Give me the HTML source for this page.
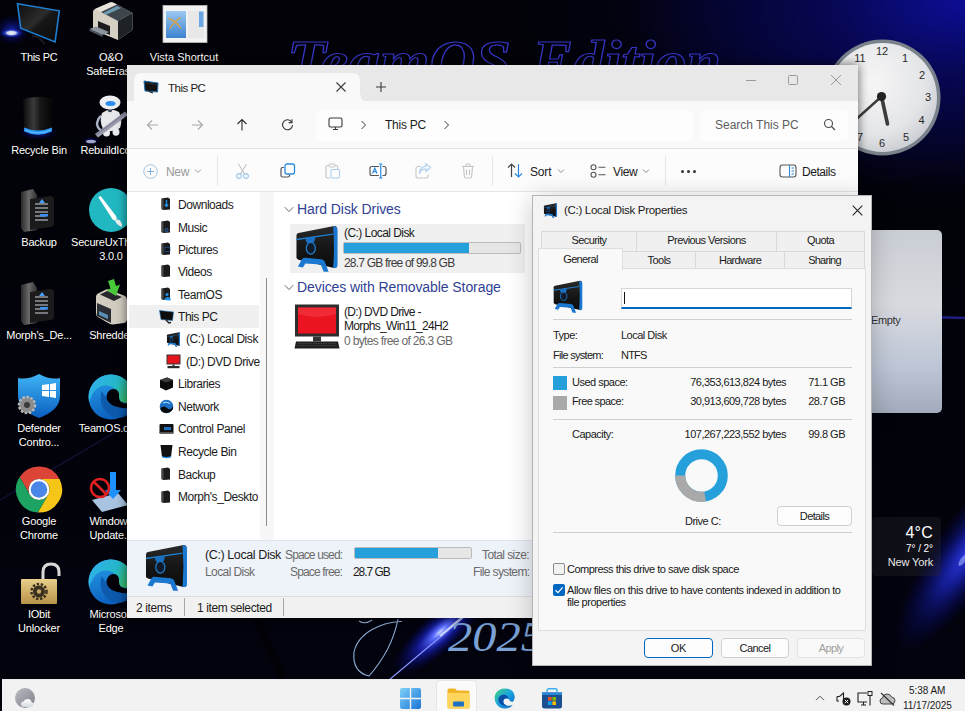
<!DOCTYPE html>
<html><head><meta charset="utf-8">
<style>
*{box-sizing:border-box;margin:0;padding:0}
html,body{width:965px;height:711px;overflow:hidden}
body{position:relative;font-family:"Liberation Sans",sans-serif;font-size:12px;color:#1a1a1a;background:#02030a}
.a{position:absolute}
.t{position:absolute;white-space:nowrap;line-height:14px}
svg{position:absolute;overflow:visible}
#bg{left:0;top:0;width:965px;height:679px;background:
 radial-gradient(ellipse 340px 190px at 965px 0px, rgba(14,14,156,0.95) 0%, rgba(8,8,100,0.75) 40%, rgba(3,3,40,0) 100%),
 radial-gradient(ellipse 460px 210px at 965px 0px, rgba(6,6,70,0.5) 0%, rgba(3,3,30,0) 100%),
 linear-gradient(180deg,#020208 0%,#02020a 60%,#03030e 100%)}
.dl{position:absolute;color:#fff;font-size:11px;text-align:center;line-height:14px;text-shadow:0 0 2px #000,0 1px 1px #000;width:80px;letter-spacing:-0.2px}
/* explorer */
#ex{left:127px;top:65px;width:731px;height:553px;background:#e8e8e8;box-shadow:0 0 10px rgba(0,0,0,.6)}
.nv{position:absolute;left:178px;font-size:12px;letter-spacing:-0.45px;line-height:14px;color:#1b1b1b;white-space:nowrap}
.ni{position:absolute;left:160px;width:11px;height:13px}
/* props */
#pr{left:532px;top:195px;width:340px;height:471px;background:#f3f3f3;border:1px solid #b5b5b5;box-shadow:0 4px 24px rgba(0,0,0,.22)}
.pt{position:absolute;font-size:11px;letter-spacing:-0.5px;line-height:13px;color:#1a1a1a;white-space:nowrap}
.tab{position:absolute;background:#f0f0f0;border:1px solid #d9d9d9;border-bottom:none;font-size:11px;letter-spacing:-0.35px;text-align:center;line-height:17px;color:#1a1a1a}
.btn{position:absolute;background:#fdfdfd;border:1px solid #d0d0d0;border-radius:4px;font-size:11px;letter-spacing:-0.3px;text-align:center;line-height:18px;color:#1a1a1a}
#tb{left:0;top:679px;width:965px;height:32px;background:#eeeeee;border-top:1px solid #dcdcdc}
</style></head><body>
<svg width="0" height="0" style="position:absolute"><defs>
<linearGradient id="drvb" x1="0" y1="0" x2="0" y2="1"><stop offset="0" stop-color="#2a2a2a"/><stop offset="0.5" stop-color="#161616"/><stop offset="1" stop-color="#0c0c0c"/></linearGradient>
<g id="drv">
<path d="M6 14 Q6 12 8 11.5 L44 4.5 Q47 4 47 7 V44 Q47 47.5 44 47 L8 38.5 Q6 38 6 36 Z" fill="url(#drvb)"/>
<path d="M43 4.8 Q47 4 47.5 8 V44 Q47.5 47.5 44 47 L43 46.8 Q44.8 26 43 4.8 Z" fill="#1b78d0"/>
<path d="M6 17.5 L43 12 V13.3 L6 18.8 Z" fill="#1e7fd0"/>
<path d="M15 17 L25 15.5 Q25 21 22 22 L18 22.5 Q15 21 15 17 Z" fill="#1b6fc0"/>
<ellipse cx="20.5" cy="27" rx="4.6" ry="6" fill="#101c2a" stroke="#1e78c8" stroke-width="1.3"/>
<path d="M7.5 45.5 L11.5 38 Q12.5 36.5 15 36.5 L31 38 Q33.5 38.3 34.5 40.5 L38.5 50.8 L33.5 50.8 L30.5 43.5 L15 42.5 L12.5 46.5 Z" fill="#1b78d0"/>
</g></defs></svg>
<div id="bg" class="a"></div>
<svg style="left:0;top:0" width="965" height="679" viewBox="0 0 965 679">
<defs>
 <radialGradient id="halo" cx="0.5" cy="0.5" r="0.5"><stop offset="0" stop-color="#c8d8ff"/><stop offset="0.15" stop-color="#5a6cff"/><stop offset="0.45" stop-color="#1a24c8" stop-opacity="0.7"/><stop offset="1" stop-color="#000060" stop-opacity="0"/></radialGradient>
 <radialGradient id="halo2" cx="0.5" cy="0.5" r="0.5"><stop offset="0" stop-color="#3040ff"/><stop offset="0.35" stop-color="#1a24c0" stop-opacity="0.8"/><stop offset="0.7" stop-color="#0a1080" stop-opacity="0.4"/><stop offset="1" stop-color="#000060" stop-opacity="0"/></radialGradient>
</defs>
<path d="M0 500 L560 170" stroke="#1a1a4a" stroke-width="1.5" opacity="0.6"/>
<path d="M900 316 L965 318" stroke="#2424a0" stroke-width="2.5" opacity="0.8"/>
<path d="M256 618 L283 679" stroke="#000" stroke-width="7" opacity="0.5"/>
<text x="287" y="80" font-family="Liberation Serif" font-weight="bold" font-style="italic" font-size="56" textLength="224" lengthAdjust="spacingAndGlyphs" fill="none" stroke="#3636c4" stroke-width="1.2">TeamOS</text>
<text x="532" y="80" font-family="Liberation Serif" font-weight="bold" font-style="italic" font-size="56" textLength="189" lengthAdjust="spacingAndGlyphs" fill="none" stroke="#3636c4" stroke-width="1.2">Edition</text>
<ellipse cx="440" cy="632" rx="62" ry="20" fill="url(#halo)" transform="rotate(-42 440 632)"/>
<path d="M389 680 L470 612" stroke="#8a98ff" stroke-width="1.1"/>
<path d="M440 636 L466 614" stroke="#e8f0ff" stroke-width="2.2" opacity="0.75"/>
<path d="M359 621 Q365 625 372 620 M398 619 Q392 650 369 676 Q352 672 354 652 Q358 633 385 624 Q395 621 402 621.5" fill="none" stroke="#8fb0dc" stroke-width="1.1"/>
<text x="448" y="651" font-family="Liberation Serif" font-style="italic" font-size="42" fill="#7aa2d6" textLength="97" lengthAdjust="spacingAndGlyphs">2025</text>
<ellipse cx="968" cy="552" rx="120" ry="34" fill="url(#halo2)" opacity="0.9" transform="rotate(-55 968 552)"/>
<ellipse cx="963" cy="560" rx="7" ry="2.5" fill="#b8c8ff" opacity="0.5" transform="rotate(-55 963 560)"/>
</svg>
<!-- clock gadget -->
<svg style="left:820px;top:35px" width="130" height="125" viewBox="820 35 130 125">
 <defs><radialGradient id="face" cx="0.4" cy="0.35" r="0.7"><stop offset="0" stop-color="#f6f6f6"/><stop offset="0.7" stop-color="#e4e5e8"/><stop offset="1" stop-color="#c8cbd0"/></radialGradient></defs>
 <circle cx="882.5" cy="97.5" r="58" fill="#7a828c"/>
 <circle cx="882.5" cy="97.5" r="54.5" fill="url(#face)"/>
 <g font-family="Liberation Sans" font-size="11" fill="#2a2a2a" text-anchor="middle">
  <text x="882" y="55">12</text><text x="905" y="62">1</text><text x="922" y="78.5">2</text><text x="928" y="101">3</text><text x="921.5" y="124">4</text><text x="906" y="141">5</text><text x="882" y="147">6</text><text x="860" y="141">7</text><text x="860" y="62">11</text>
 </g>
 <path d="M881.5 96.5 L887.5 124" stroke="#3c3c3c" stroke-width="3.6" stroke-linecap="round"/>
 <path d="M881.5 96.5 L852 123" stroke="#3c3c3c" stroke-width="2.4" stroke-linecap="round"/>
 <circle cx="881.5" cy="96.5" r="4.6" fill="#222"/>
</svg>
<!-- gadget panel -->
<div class="a" style="left:840px;top:230px;width:102px;height:183px;border-radius:5px;background:linear-gradient(180deg,#c9cdd4 0%,#d9dadf 40%,#bcc6d6 75%,#a2abbb 100%)"></div>
<div class="t" style="left:871px;top:313px;font-size:11px;color:#333;letter-spacing:-0.34px">Empty</div>
<!-- weather -->
<div class="a" style="left:872px;top:517px;width:69px;height:59px;border-radius:4px;background:rgba(40,40,50,0.35)"></div>
<div class="t" style="letter-spacing:0.21px;right:32px;top:524px;font-size:16px;line-height:18px;color:#fff">4°C</div>
<div class="t" style="letter-spacing:-0.07px;right:32px;top:543px;font-size:10px;line-height:12px;color:#fff">7° / 2°</div>
<div class="t" style="right:32px;top:556px;font-size:11px;line-height:13px;color:#e8e8e8;letter-spacing:-0.15px">New York</div>

<!-- ============ DESKTOP ICONS ============ -->
<svg style="left:0;top:0" width="220" height="679" viewBox="0 0 220 679">
<defs>
 <radialGradient id="glow1"><stop offset="0" stop-color="#f4f4e8"/><stop offset="0.35" stop-color="#c8d4f0"/><stop offset="0.6" stop-color="#2a3fd0" stop-opacity="0.7"/><stop offset="1" stop-color="#0010a0" stop-opacity="0"/></radialGradient>
 <radialGradient id="halo3"><stop offset="0" stop-color="#1a30e0" stop-opacity="0.7"/><stop offset="1" stop-color="#000080" stop-opacity="0"/></radialGradient>
 <linearGradient id="vst" x1="0" y1="0" x2="0" y2="1"><stop offset="0" stop-color="#9cc8f0"/><stop offset="1" stop-color="#3c82d0"/></linearGradient>
 <linearGradient id="scr" x1="0" y1="0" x2="1" y2="1"><stop offset="0" stop-color="#0c0c0c"/><stop offset="0.45" stop-color="#2c2c2c"/><stop offset="0.55" stop-color="#161616"/><stop offset="1" stop-color="#0a0a0a"/></linearGradient>
 <linearGradient id="bin" x1="0" y1="0" x2="1" y2="0"><stop offset="0" stop-color="#0a0a0a"/><stop offset="0.35" stop-color="#3a3a3a"/><stop offset="0.6" stop-color="#151515"/><stop offset="1" stop-color="#050505"/></linearGradient>
 <linearGradient id="fold" x1="0" y1="0" x2="1" y2="0"><stop offset="0" stop-color="#2a2a2a"/><stop offset="0.5" stop-color="#6a6a6a"/><stop offset="1" stop-color="#303030"/></linearGradient>
 <linearGradient id="shield" x1="0" y1="0" x2="0" y2="1"><stop offset="0" stop-color="#3fb3f5"/><stop offset="1" stop-color="#0a5fc0"/></linearGradient>
 <linearGradient id="gold" x1="0" y1="0" x2="0" y2="1"><stop offset="0" stop-color="#e8cf8a"/><stop offset="1" stop-color="#b8934a"/></linearGradient>
 <linearGradient id="edgB" x1="0" y1="0" x2="0.3" y2="1"><stop offset="0" stop-color="#2aa0ea"/><stop offset="1" stop-color="#0c62c0"/></linearGradient><linearGradient id="edgT" x1="0" y1="0.3" x2="1" y2="0.7"><stop offset="0" stop-color="#30b0ec"/><stop offset="0.55" stop-color="#25b8c8"/><stop offset="1" stop-color="#3cbf5a"/></linearGradient>
</defs>
<!-- This PC -->
<ellipse cx="12" cy="30" rx="18" ry="15" fill="url(#halo3)"/><ellipse cx="11.5" cy="33" rx="12" ry="5" fill="url(#glow1)"/>
<path d="M17.5 3.7 L59.3 10.8 L55.1 41.9 L20.7 28.2 Z" fill="url(#scr)" stroke="#1e7fd0" stroke-width="1.6"/>
<path d="M32 36 L38 37 L45 44" stroke="#1a1a1a" stroke-width="2" fill="none"/>
<!-- O&O -->
<path d="M93 12 Q93 10 95 9 L110 2.5 Q112 2 114 3 L132.5 13 V30 L118 40 L96 31 Q93 30 93 28 Z" fill="#d6d0c4"/>
<path d="M95 9 L110 2.5 Q112 2 114 3 L117 4.6 L101 12 Z" fill="#e8e4dc"/>
<path d="M101 12 L117 4.6 L132.5 13 L118 21 Z" fill="#3c464c"/>
<path d="M103 13 L117 6 L121 8 L106 15 Z" fill="#7ab0c8" opacity="0.8"/>
<path d="M118 21 L132.5 13 V30 L118 40 Z" fill="#1e2226"/>
<path d="M98 21 L110 26 V35 L98 30 Z" fill="#1c1c1c"/>
<path d="M89.5 29 L96 26.5 L109 32 L102.5 35 Z" fill="#8c949e"/>
<path d="M89.5 29 V31 L102.5 37 V35 Z" fill="#4c545c"/>
<!-- Vista shortcut -->
<rect x="163" y="5.5" width="44" height="37" fill="#f2f2f2" stroke="#bdbdbd" stroke-width="0.8"/>
<rect x="166" y="11" width="20" height="27" fill="url(#vst)"/>
<path d="M168.5 18.5 Q175 20 181 28.5 M180.5 17.5 Q175 21 169.5 29" stroke="#dca040" stroke-width="1.3" fill="none"/>
<rect x="188" y="11" width="16" height="27" fill="#e8e8e8"/>
<rect x="199" y="11.5" width="4.5" height="15.5" fill="#6aa6e4"/>
<!-- Recycle bin -->
<ellipse cx="38" cy="132" rx="20" ry="8" fill="url(#halo3)"/>
<path d="M23 99 Q38 95 53 99 L52 130 Q38 137 24 130 Z" fill="url(#bin)"/>
<path d="M24 127.5 Q38 133.5 52 127.5 L51.8 131.5 Q38 138 24.2 131.5 Z" fill="#2a9af8"/>
<path d="M25 130 Q38 136 51 130" stroke="#8fd0ff" stroke-width="0.8" fill="none" opacity="0.8"/>
<!-- robot -->
<ellipse cx="91" cy="141" rx="9" ry="4" fill="url(#halo3)"/>
<ellipse cx="91" cy="141.5" rx="5" ry="1.8" fill="#dfe8f0" opacity="0.7"/>
<path d="M101 116 Q98 118 97 124 Q98 129 101 130" stroke="#aab4c4" stroke-width="2.4" fill="none"/>
<path d="M102 113 Q110 107 119 112 Q123 120 120 128 Q111 134 103 129 Q99 121 102 113 Z" fill="#e6e8ec"/>
<ellipse cx="106.5" cy="133" rx="3.5" ry="3.5" fill="#e8eaee"/>
<ellipse cx="116" cy="132" rx="3.5" ry="3.8" fill="#e8eaee"/>
<circle cx="110" cy="110" r="2.2" fill="#3a4250"/>
<ellipse cx="110" cy="102.5" rx="10.5" ry="7" fill="#eceef1"/>
<ellipse cx="110.5" cy="103.5" rx="5" ry="2.5" fill="#2a8cf0"/>
<path d="M95 134 L125 111.5 L128 115 L98 137.5 Z" fill="#9a9cb0"/>
<path d="M96 135 L126 112.5" stroke="#6a6c80" stroke-width="0.8"/>
<!-- Backup / Morph -->
<g id="bk">
<path d="M21 192 L33 189 L37 195 V230 L24 232 L21 228 Z" fill="url(#fold)"/>
<path d="M30 199 L50 196 Q54 196 54 200 V224 Q54 227 50 227 L30 230 Z" fill="#1b1b1b"/>
<path d="M35 204 H48 M35 208 H48 M35 212 H48 M35 216 H46 M35 220 H48" stroke="#cfd6de" stroke-width="1.2"/>
<path d="M39 203 L42 199 L45 203 Z" fill="#4aa0ff"/>
<rect x="40" y="214" width="8" height="2.5" fill="#3a8ff0"/>
</g>
<use href="#bk" y="93"/>
<!-- SecureUx -->
<circle cx="111" cy="210" r="22" fill="#21b8c2"/>
<path d="M98.5 197.5 Q99.5 195.5 101 196.5 L116 216 Q117.5 219 115.5 220.5 Q113 221 112 218.5 Z" fill="#fff"/>
<path d="M115.5 220 Q119 218.5 121 222 Q123 226 121.5 227 Q118 226 115.5 222 Z" fill="#f2f2f2"/>
<!-- Shredder -->
<path d="M96 297 Q96 294 99 293 L106 289.5 Q108 289 110 290 L125 296 Q127 297 127 300 V319 Q127 322 124 323 L113 324.5 Q111 324.5 109 323.5 L98 317 Q96 316 96 313 Z" fill="#d2ccc0"/>
<path d="M100 294.5 L107 291 L122 297 L114 301 Z" fill="#26282c"/>
<path d="M97 303 L111 309 V323 L97 316 Z" fill="#2a2e34"/>
<path d="M99 311 L108 315 V319 L99 315 Z" fill="#5a90b8"/>
<path d="M108 281 L114 279 L116 286 L120 284.5 L116 296 L106.5 290 L110.5 288.5 Z" fill="#48c83a"/>
<!-- Defender -->
<path d="M39 374 Q50 380 60 378 V396 Q60 410 39 418 Q18 410 18 396 V378 Q28 380 39 374 Z" fill="url(#shield)"/>
<path d="M42 385 L49 384 V390 H42 Z M50 384 L56 383 V390 H50 Z M42 391 H49 V397 L42 396 Z M50 391 H56 V398 L50 397 Z" fill="#fff"/>
<circle cx="27" cy="405" r="8" fill="#8a8a8a"/><circle cx="27" cy="405" r="8" fill="none" stroke="#b8b8b8" stroke-width="2.5" stroke-dasharray="2.5 1.6"/><circle cx="27" cy="405" r="3" fill="#3a3a3a"/>
<!-- TeamOS edge -->
<g id="edge1" transform="translate(111 397)">
<circle r="22.5" fill="url(#edgB)"/>
<path d="M-21.8 5.5 A22.5 22.5 0 1 1 22.2 3.6 L22.2 6 Q12 6.5 8 3.5 Q7 -10 -4 -11.5 Q-17 -12 -21.8 5.5 Z" fill="url(#edgT)"/>
<path d="M-9.5 -6 Q-14 12 3 20.5 Q14 23 22.5 13 L22.5 10.5 Q12 11 5 8 Q-4 3 -9.5 -6 Z" fill="#0d57a8" opacity="0.85"/>
<path d="M-4.5 -1 Q-3 -8.5 3.5 -8 Q9 -6.5 8 0.5 Q8.5 5.5 13.5 6.2 L22.5 6.5 L22.5 11.5 Q12 12 4.5 9.5 Q-5 6 -4.5 -1 Z" fill="#020208"/>
</g>
<!-- Chrome -->
<g transform="translate(39 489.5)">
<path d="M-19.34 -12.5 A23 23 0 0 1 20.5 -10.5 L0 -10.5 A10.5 10.5 0 0 0 -9.09 5.25 Z" fill="#db4437"/>
<path d="M20.5 -10.5 A23 23 0 0 1 -1.16 23 L9.09 5.25 A10.5 10.5 0 0 0 0 -10.5 Z" fill="#f5c518"/>
<path d="M-1.16 23 A23 23 0 0 1 -19.34 -12.5 L-9.09 5.25 A10.5 10.5 0 0 0 9.09 5.25 Z" fill="#1da462"/>
<circle r="10.5" fill="#fff"/><circle r="8.3" fill="#4a86e8"/>
</g>
<!-- Windows update -->
<path d="M92 500 L118 493 L128 505 L102 512 Z" fill="#a8c4e0"/>
<path d="M110 472 H116 V490 H121 L113 499 L105 490 H110 Z" fill="#1e90ff"/>
<circle cx="100" cy="488" r="9" fill="none" stroke="#e02020" stroke-width="2.6"/>
<path d="M94 482 L106 494" stroke="#e02020" stroke-width="2.6"/>
<!-- IObit -->
<path d="M43 580 V572 Q43 564 51 564 Q59 564 59 572 V576" fill="none" stroke="#d8d8d8" stroke-width="3"/>
<rect x="21" y="579" width="36" height="25" rx="1" fill="url(#gold)"/>
<circle cx="39" cy="591.5" r="6" fill="#3a3020"/><circle cx="39" cy="591.5" r="7.5" fill="none" stroke="#3a3020" stroke-width="2.5" stroke-dasharray="2.4 1.7"/><circle cx="39" cy="591.5" r="2.2" fill="#c8a868"/>
<use href="#edge1" y="185"/>
</svg>
<div class="dl" style="left:-1px;top:50px;font-size:11px;letter-spacing:-0.3px">This PC</div>
<div class="dl" style="left:71px;top:50px">O&amp;O<br>SafeErase</div>
<div class="dl" style="letter-spacing:0.02px;left:144px;top:50px">Vista Shortcut</div>
<div class="dl" style="letter-spacing:-0.22px;left:-1px;top:143px">Recycle Bin</div>
<div class="dl" style="left:71px;top:143px">RebuildIcons</div>
<div class="dl" style="left:-1px;top:235px">Backup</div>
<div class="dl" style="left:71px;top:235px">SecureUxTheme<br>3.0.0</div>
<div class="dl" style="left:-1px;top:328px">Morph's_De...</div>
<div class="dl" style="left:71px;top:328px">Shredder</div>
<div class="dl" style="left:-1px;top:421px">Defender<br>Contro...</div>
<div class="dl" style="left:71px;top:421px">TeamOS.com</div>
<div class="dl" style="left:-1px;top:514px">Google<br>Chrome</div>
<div class="dl" style="left:71px;top:514px">Windows<br>Update...</div>
<div class="dl" style="left:-1px;top:607px">IObit<br>Unlocker</div>
<div class="dl" style="left:71px;top:607px">Microsoft<br>Edge</div>

<!-- ============ EXPLORER ============ -->
<div id="ex" class="a">
</div>
<!-- tab -->
<div class="a" style="left:134px;top:73px;width:226px;height:30px;background:#f9f9f9;border-radius:7px 7px 0 0"></div>
<div class="a" style="left:360px;top:95px;width:8px;height:6px;background:radial-gradient(circle at 100% 0%, #e8e8e8 7px, #f9f9f9 7.5px)"></div>
<div class="t" style="left:168px;top:81px;font-size:11.5px;letter-spacing:-0.5px;color:#222">This PC</div>
<div class="a" style="left:127px;top:101px;width:731px;height:47px;background:#f9f9f9"></div>
<div class="a" style="left:316px;top:110px;width:377px;height:31px;background:#fdfdfd;border-radius:5px"></div>
<div class="a" style="left:700px;top:110px;width:148px;height:31px;background:#fdfdfd;border-radius:5px"></div>
<div class="t" style="letter-spacing:-0.24px;left:385px;top:118px;font-size:12px;color:#1b1b1b">This PC</div>
<!-- title bar icons -->
<svg style="left:143px;top:80px" width="16" height="14" viewBox="0 0 16 14"><path d="M1 1 L15 3 L14.5 12 L2 11 Z" fill="#141414" stroke="#1c6fb0" stroke-width="1"/><path d="M3 3 L13 4.5" stroke="#2a2a2a" stroke-width="1"/><path d="M6 11.5 L10 13" stroke="#222" stroke-width="1.2"/></svg>
<svg style="left:335px;top:81px" width="12" height="12" viewBox="0 0 12 12"><path d="M1.5 1.5 L10.5 10.5 M10.5 1.5 L1.5 10.5" stroke="#3a3a3a" stroke-width="1.1"/></svg>
<svg style="left:375px;top:81px" width="12" height="12" viewBox="0 0 12 12"><path d="M6 1 V11 M1 6 H11" stroke="#3a3a3a" stroke-width="1.1"/></svg>
<svg style="left:745px;top:74px" width="12" height="12" viewBox="0 0 12 12"><path d="M1 6.5 H11" stroke="#9a9a9a" stroke-width="1"/></svg>
<svg style="left:787px;top:74px" width="12" height="12" viewBox="0 0 12 12"><rect x="1.5" y="1.5" width="9" height="9" rx="1" fill="none" stroke="#9a9a9a" stroke-width="1"/></svg>
<svg style="left:830px;top:74px" width="12" height="12" viewBox="0 0 12 12"><path d="M1 1 L11 11 M11 1 L1 11" stroke="#9a9a9a" stroke-width="1"/></svg>
<!-- nav arrows -->
<svg style="left:146px;top:119px" width="13" height="12" viewBox="0 0 13 12"><path d="M12 6 H1.5 M6 1.5 L1.5 6 L6 10.5" fill="none" stroke="#a9a9a9" stroke-width="1.1"/></svg>
<svg style="left:191px;top:119px" width="13" height="12" viewBox="0 0 13 12"><path d="M1 6 H11.5 M7 1.5 L11.5 6 L7 10.5" fill="none" stroke="#a9a9a9" stroke-width="1.1"/></svg>
<svg style="left:236px;top:118px" width="12" height="13" viewBox="0 0 12 13"><path d="M6 12.5 V1.5 M1.5 6 L6 1.5 L10.5 6" fill="none" stroke="#2b2b2b" stroke-width="1.1"/></svg>
<svg style="left:281px;top:118px" width="13" height="13" viewBox="0 0 13 13"><path d="M10.8 4.2 A5 5 0 1 0 11.5 7" fill="none" stroke="#3a3a3a" stroke-width="1.1"/><path d="M11 1.2 V4.6 H7.6" fill="none" stroke="#3a3a3a" stroke-width="1.1"/></svg>
<!-- address contents -->
<svg style="left:328px;top:117px" width="15" height="14" viewBox="0 0 15 14"><rect x="1" y="1" width="13" height="9" rx="1.5" fill="none" stroke="#3a3a3a" stroke-width="1.1"/><path d="M5 12.5 H10 M7.5 10 V12.5" stroke="#3a3a3a" stroke-width="1.1"/></svg>
<svg style="left:360px;top:120px" width="7" height="10" viewBox="0 0 7 10"><path d="M1.5 1 L5.5 5 L1.5 9" fill="none" stroke="#3a3a3a" stroke-width="1"/></svg>
<svg style="left:443px;top:120px" width="7" height="10" viewBox="0 0 7 10"><path d="M1.5 1 L5.5 5 L1.5 9" fill="none" stroke="#3a3a3a" stroke-width="1"/></svg>
<svg style="left:823px;top:118px" width="13" height="13" viewBox="0 0 13 13"><circle cx="5.5" cy="5.5" r="4" fill="none" stroke="#4a4a4a" stroke-width="1.1"/><path d="M8.5 8.5 L12 12" stroke="#4a4a4a" stroke-width="1.2"/></svg>
<div class="t" style="letter-spacing:-0.01px;left:715px;top:118px;font-size:12px;color:#5e5e5e">Search This PC</div>
<div class="a" style="left:127px;top:148px;width:731px;height:1px;background:#e3e3e3"></div>
<div class="a" style="left:127px;top:149px;width:731px;height:42px;background:#fcfcfc"></div>
<div class="a" style="left:127px;top:191px;width:731px;height:1px;background:#e5e5e5"></div>
<div class="a" style="left:127px;top:192px;width:731px;height:348px;background:#fff"></div>
<div class="a" style="left:260px;top:192px;width:14px;height:348px;background:#f7f7f7"></div>
<div class="a" style="left:266px;top:278px;width:1px;height:248px;background:#8a8a8a"></div>
<!-- command bar -->
<svg style="left:143px;top:164px" width="15" height="15" viewBox="0 0 15 15"><circle cx="7.5" cy="7.5" r="6.8" fill="none" stroke="#a8c4de" stroke-width="1"/><path d="M7.5 4 V11 M4 7.5 H11" stroke="#7fb0dc" stroke-width="1"/></svg>
<div class="t" style="left:166px;top:165px;color:#9a9a9a;letter-spacing:-0.34px">New</div>
<svg style="left:194px;top:168px" width="8" height="6" viewBox="0 0 8 6"><path d="M1 1.5 L4 4.5 L7 1.5" fill="none" stroke="#a0a0a0" stroke-width="1"/></svg>
<div class="a" style="left:217px;top:156px;width:1px;height:30px;background:#e6e6e6"></div>
<svg style="left:235px;top:163px" width="15" height="16" viewBox="0 0 15 16"><path d="M3.5 1 L9.5 11 M11.5 1 L5.5 11" stroke="#b8b8b8" stroke-width="1"/><circle cx="4" cy="13" r="2.4" fill="none" stroke="#9cc6ec" stroke-width="1.1"/><circle cx="11" cy="13" r="2.4" fill="none" stroke="#9cc6ec" stroke-width="1.1"/></svg>
<svg style="left:280px;top:163px" width="16" height="15" viewBox="0 0 16 15"><path d="M4 4.5 H2.5 Q1 4.5 1 6 V12.5 Q1 14 2.5 14 H8 Q9.5 14 9.5 12.5 V11.5" fill="none" stroke="#555" stroke-width="1.2"/><rect x="5" y="1" width="9.5" height="10" rx="2" fill="#fff" stroke="#2b8ae0" stroke-width="1.3"/></svg>
<svg style="left:325px;top:163px" width="16" height="16" viewBox="0 0 16 16"><path d="M4 2.5 H2.5 Q1 2.5 1 4 V13.5 Q1 15 2.5 15 H5" fill="none" stroke="#c4c4c4" stroke-width="1.1"/><rect x="4" y="1" width="6" height="3" rx="1" fill="#fff" stroke="#c4c4c4" stroke-width="1"/><path d="M10 2.5 H11 Q12.5 2.5 12.5 4 V6" fill="none" stroke="#c4c4c4" stroke-width="1.1"/><rect x="6" y="6.5" width="8.5" height="8.5" rx="1.5" fill="#fff" stroke="#a8cdef" stroke-width="1.1"/></svg>
<svg style="left:369px;top:163px" width="18" height="16" viewBox="0 0 18 16"><path d="M10 3.5 H3 Q1 3.5 1 5.5 V10.5 Q1 12.5 3 12.5 H10 M13.5 3.5 H15 Q17 3.5 17 5.5 V10.5 Q17 12.5 15 12.5 H13.5" fill="none" stroke="#555" stroke-width="1.2"/><path d="M3.5 10.5 L5.8 5 L8 10.5 M4.3 8.6 H7.3" fill="none" stroke="#2b8ae0" stroke-width="1.1"/><path d="M10 1 H13.5 M11.75 1 V15 M10 15 H13.5" fill="none" stroke="#2b8ae0" stroke-width="1.2"/></svg>
<svg style="left:415px;top:163px" width="17" height="16" viewBox="0 0 17 16"><path d="M6 3.5 H3 Q1 3.5 1 5.5 V13 Q1 15 3 15 H11 Q13 15 13 13 V11.5" fill="none" stroke="#c8c8c8" stroke-width="1.1"/><path d="M4.5 11 Q5 6 11 6 V8.5 L15.5 4.5 L11 0.8 V3.3 Q4.5 4 4.5 11 Z" fill="none" stroke="#a8cdef" stroke-width="1.1"/></svg>
<svg style="left:461px;top:163px" width="14" height="16" viewBox="0 0 14 16"><path d="M1 3.5 H13 M5 3.5 V2 Q5 1 6 1 H8 Q9 1 9 2 V3.5 M2.5 3.5 L3.3 13.5 Q3.5 15 5 15 H9 Q10.5 15 10.7 13.5 L11.5 3.5 M5.5 6.5 V12 M8.5 6.5 V12" fill="none" stroke="#c4c4c4" stroke-width="1.1"/></svg>
<div class="a" style="left:492px;top:156px;width:1px;height:30px;background:#e6e6e6"></div>
<svg style="left:507px;top:163px" width="16" height="15" viewBox="0 0 16 15"><path d="M4.5 14 V1 M1 4.5 L4.5 1 L8 4.5" fill="none" stroke="#444" stroke-width="1.2"/><path d="M11.5 1 V14 M8 10.5 L11.5 14 L15 10.5" fill="none" stroke="#2b8ae0" stroke-width="1.2"/></svg>
<div class="t" style="left:530px;top:165px;color:#1b1b1b;letter-spacing:-0.18px">Sort</div>
<svg style="left:557px;top:168px" width="8" height="6" viewBox="0 0 8 6"><path d="M1 1.5 L4 4.5 L7 1.5" fill="none" stroke="#888" stroke-width="1"/></svg>
<svg style="left:590px;top:164px" width="16" height="14" viewBox="0 0 16 14"><circle cx="3.5" cy="3.3" r="2.5" fill="none" stroke="#555" stroke-width="1.1"/><circle cx="3.5" cy="10.7" r="2.5" fill="none" stroke="#555" stroke-width="1.1"/><path d="M8.5 3.3 H15.5 M8.5 10.7 H15.5" stroke="#555" stroke-width="1.1"/></svg>
<div class="t" style="left:613px;top:165px;color:#1b1b1b;letter-spacing:-0.35px">View</div>
<svg style="left:642px;top:168px" width="8" height="6" viewBox="0 0 8 6"><path d="M1 1.5 L4 4.5 L7 1.5" fill="none" stroke="#888" stroke-width="1"/></svg>
<div class="a" style="left:665px;top:156px;width:1px;height:30px;background:#e6e6e6"></div>
<svg style="left:680px;top:169px" width="17" height="5" viewBox="0 0 17 5"><circle cx="2.5" cy="2.5" r="1.5" fill="#333"/><circle cx="8.5" cy="2.5" r="1.5" fill="#333"/><circle cx="14.5" cy="2.5" r="1.5" fill="#333"/></svg>
<svg style="left:779px;top:164px" width="18" height="14" viewBox="0 0 18 14"><rect x="1" y="1" width="16" height="12" rx="2.5" fill="none" stroke="#555" stroke-width="1.1"/><path d="M10.5 1 V13" stroke="#2b8ae0" stroke-width="1.1"/><path d="M12.5 4 H15 M12.5 7 H15 M12.5 10 H15" stroke="#2b8ae0" stroke-width="1"/></svg>
<div class="t" style="left:802px;top:165px;color:#1b1b1b;letter-spacing:-0.45px">Details</div>
<!-- nav pane -->
<svg style="left:160px;top:197px" width="12" height="14" viewBox="0 0 12 14"><path d="M1.5 1.5 L8 0.5 L10 2 V12.5 L3.5 13 L1.5 12 Z" fill="#1b1b1b"/><path d="M1.5 1.5 L3.5 2.5 V13 L1.5 12 Z" fill="#4a4a4a"/><path d="M6.5 3 V9 M4.8 7.5 L6.5 9.5 L8.2 7.5" stroke="#1e8ee6" stroke-width="1.4" fill="none"/></svg>
<div class="nv" style="top:198px">Downloads</div>
<svg style="left:160px;top:220px" width="12" height="14" viewBox="0 0 12 14"><path d="M1.5 1.5 L8 0.5 L10 2 V12.5 L3.5 13 L1.5 12 Z" fill="#1b1b1b"/><path d="M1.5 1.5 L3.5 2.5 V13 L1.5 12 Z" fill="#4a4a4a"/><circle cx="6.5" cy="10" r="1.6" fill="none" stroke="#2a6fc0" stroke-width="0.9"/></svg>
<div class="nv" style="top:221px">Music</div>
<svg style="left:160px;top:242px" width="12" height="14" viewBox="0 0 12 14"><path d="M1.5 1.5 L8 0.5 L10 2 V12.5 L3.5 13 L1.5 12 Z" fill="#1b1b1b"/><path d="M1.5 1.5 L3.5 2.5 V13 L1.5 12 Z" fill="#4a4a4a"/><rect x="5" y="5.5" width="5" height="4" fill="#111" stroke="#1a5fb0" stroke-width="0.6"/></svg>
<div class="nv" style="top:243px">Pictures</div>
<svg style="left:160px;top:264px" width="12" height="14" viewBox="0 0 12 14"><path d="M1.5 1.5 L8 0.5 L10 2 V12.5 L3.5 13 L1.5 12 Z" fill="#1b1b1b"/><path d="M1.5 1.5 L3.5 2.5 V13 L1.5 12 Z" fill="#4a4a4a"/></svg>
<div class="nv" style="top:265px">Videos</div>
<svg style="left:160px;top:287px" width="12" height="14" viewBox="0 0 12 14"><path d="M1.5 1.5 L8 0.5 L10 2 V12.5 L3.5 13 L1.5 12 Z" fill="#1b1b1b"/><path d="M1.5 1.5 L3.5 2.5 V13 L1.5 12 Z" fill="#4a4a4a"/><path d="M4 13 Q6 8 10.5 11 V13.5 Z" fill="#1e8ee6"/><circle cx="7" cy="7.5" r="1.6" fill="#1e8ee6"/></svg>
<div class="nv" style="top:288px">TeamOS</div>
<div class="a" style="left:129px;top:305px;width:130px;height:23px;background:#f0f0f0"></div>
<svg style="left:159px;top:310px" width="15" height="14" viewBox="0 0 15 14"><path d="M0.5 0.5 L14.5 2 L13.5 10.5 L2 9.5 Z" fill="#0d0d0d" stroke="#1e6fb5" stroke-width="0.6"/><path d="M7 10 L10 13 L12 12.5" stroke="#222" stroke-width="1.5" fill="none"/></svg>
<div class="nv" style="top:310px">This PC</div>
<svg style="left:166px;top:332px" width="15" height="15" viewBox="5 3.5 43.5 47.5"><use href="#drv"/></svg>
<div class="nv" style="left:186px;top:332px">(C:) Local Disk</div>
<svg style="left:166px;top:354px" width="15" height="15" viewBox="0 0 15 15"><rect x="0.5" y="0.5" width="14" height="10" fill="#333"/><rect x="1.5" y="1.5" width="12" height="8" fill="#e8141c"/><path d="M6.5 10.5 H8.5 V12 H6.5 Z" fill="#333"/><rect x="1.5" y="12" width="12" height="2.2" fill="#2a2a2a"/></svg>
<div class="nv" style="left:186px;top:355px">(D:) DVD Drive</div>
<svg style="left:159px;top:377px" width="15" height="14" viewBox="0 0 15 14"><path d="M1 3 L8 0.5 L14 3 V10.5 L7 13.5 L1 10.5 Z" fill="#0b0b0b"/><path d="M1 3 L8 0.5 L14 3 L7 5.5 Z" fill="#3a3a3a"/></svg>
<div class="nv" style="top:377px">Libraries</div>
<svg style="left:159px;top:399px" width="15" height="15" viewBox="0 0 15 15"><circle cx="7.5" cy="7.5" r="6.8" fill="#1b6fc4"/><path d="M1.5 9 Q5 6 8 9 T14 7.5 V10 Q11 14 7.5 14 Q3 14 1.5 10.5 Z" fill="#0b0b0b"/><path d="M4 4 Q7 2 11 4.5" stroke="#bfe3ff" stroke-width="1" fill="none"/></svg>
<div class="nv" style="top:400px">Network</div>
<svg style="left:159px;top:423px" width="15" height="12" viewBox="0 0 15 12"><rect x="0.5" y="1" width="14" height="9.5" rx="1" fill="#111"/><rect x="5" y="4" width="7" height="3" fill="#1f6fc0"/><rect x="0.5" y="9" width="14" height="1.6" fill="#555"/></svg>
<div class="nv" style="top:422px">Control Panel</div>
<svg style="left:160px;top:444px" width="13" height="15" viewBox="0 0 13 15"><path d="M0.5 1 H12.5 L11 13 Q6.5 14.5 2 13 Z" fill="#111"/><path d="M2 12 Q6.5 14 11 12 L11 13.3 Q6.5 15 2 13.3 Z" fill="#1e8ee6"/></svg>
<div class="nv" style="top:445px">Recycle Bin</div>
<svg style="left:160px;top:467px" width="12" height="14" viewBox="0 0 12 14"><path d="M1.5 1.5 L8 0.5 L10 2 V12.5 L3.5 13 L1.5 12 Z" fill="#1b1b1b"/><path d="M1.5 1.5 L3.5 2.5 V13 L1.5 12 Z" fill="#4a4a4a"/></svg>
<div class="nv" style="top:468px">Backup</div>
<svg style="left:160px;top:490px" width="12" height="14" viewBox="0 0 12 14"><path d="M1.5 1.5 L8 0.5 L10 2 V12.5 L3.5 13 L1.5 12 Z" fill="#1b1b1b"/><path d="M1.5 1.5 L3.5 2.5 V13 L1.5 12 Z" fill="#4a4a4a"/></svg>
<div class="a" style="left:177px;top:489px;width:81px;height:16px;overflow:hidden"><div class="nv" style="left:1px;top:1px">Morph's_Desktop</div></div>
<!-- content -->
<svg style="left:284px;top:206px" width="10" height="7" viewBox="0 0 10 7"><path d="M0.8 1.2 L5 5.6 L9.2 1.2" fill="none" stroke="#6a6a6a" stroke-width="1"/></svg>
<div class="t" style="left:297px;top:201px;font-size:14px;line-height:17px;color:#2f3f94;letter-spacing:-0.08px">Hard Disk Drives</div>
<div class="a" style="left:290px;top:224px;width:235px;height:49px;background:#f0f0f0"></div>
<svg style="left:295px;top:225px" width="44" height="47" viewBox="5 3.5 43.5 47.5"><use href="#drv"/></svg>
<div class="t" style="left:344px;top:226px;font-size:12px;letter-spacing:-0.56px;color:#1b1b1b">(C:) Local Disk</div>
<div class="a" style="left:343px;top:242px;width:178px;height:12px;background:#e6e6e6;border:1px solid #bcbcbc;border-radius:2px"></div>
<div class="a" style="left:344px;top:243px;width:125px;height:10px;background:#26a0da"></div>
<div class="t" style="left:344px;top:256px;font-size:12px;letter-spacing:-0.8px;color:#3b3b3b">28.7 GB free of 99.8 GB</div>
<svg style="left:284px;top:284px" width="10" height="7" viewBox="0 0 10 7"><path d="M0.8 1.2 L5 5.6 L9.2 1.2" fill="none" stroke="#6a6a6a" stroke-width="1"/></svg>
<div class="t" style="left:297px;top:279px;font-size:14px;line-height:17px;color:#2f3f94;letter-spacing:-0.08px">Devices with Removable Storage</div>
<svg style="left:294px;top:304px" width="46" height="46" viewBox="0 0 46 46">
 <rect x="1" y="0.5" width="44" height="32" fill="#2d2d2d"/>
 <rect x="4" y="3.5" width="38" height="26" fill="#ea1520"/>
 <path d="M4 3.5 H42 V10 Q23 16 4 10 Z" fill="#f5414a" opacity="0.5"/>
 <rect x="19" y="32.5" width="8" height="5" fill="#333"/>
 <path d="M2 37.5 H44 L45.5 44.5 H0.5 Z" fill="#1f1f1f"/>
 <path d="M4 39.5 H42 M3.5 41.5 H42.5" stroke="#555" stroke-width="0.7" stroke-dasharray="1.5 1"/>
</svg>
<div class="t" style="left:344px;top:305px;font-size:12px;letter-spacing:-0.65px;color:#1b1b1b">(D:) DVD Drive -</div>
<div class="t" style="left:344px;top:319px;font-size:12px;letter-spacing:-0.66px;color:#1b1b1b">Morphs_Win11_24H2</div>
<div class="t" style="left:344px;top:334px;font-size:12px;letter-spacing:-0.66px;color:#6a6a6a">0 bytes free of 26.3 GB</div>
<!-- details pane -->
<div class="a" style="left:127px;top:540px;width:731px;height:56px;background:#eef2f9;border-top:1px solid #dfe5ee"></div>
<div class="a" style="left:127px;top:596px;width:731px;height:22px;background:#f1f1f1;border-top:1px solid #dedede"></div>

<!-- details pane contents -->
<svg style="left:145px;top:544px" width="43" height="47" viewBox="5 3.5 43.5 47.5"><use href="#drv"/></svg>
<div class="t" style="left:205px;top:547px;font-size:12.5px;line-height:16px;letter-spacing:-0.4px;color:#1b1b1b">(C:) Local Disk</div>
<div class="t" style="left:205px;top:565px;font-size:12px;letter-spacing:-0.59px;color:#6b6b6b">Local Disk</div>
<div class="t" style="left:285px;top:548px;font-size:12px;letter-spacing:-0.87px;color:#6b6b6b">Space used:</div>
<div class="t" style="left:290px;top:565px;font-size:12px;letter-spacing:-0.85px;color:#6b6b6b">Space free:</div>
<div class="a" style="left:354px;top:547px;width:118px;height:12px;background:#e6e6e6;border:1px solid #bcbcbc;border-radius:2px"></div>
<div class="a" style="left:355px;top:548px;width:83px;height:10px;background:#26a0da"></div>
<div class="t" style="left:353px;top:565px;font-size:12px;letter-spacing:-1.05px;color:#1b1b1b">28.7 GB</div>
<div class="t" style="left:482px;top:548px;font-size:12px;letter-spacing:-0.58px;color:#6b6b6b">Total size:</div>
<div class="t" style="left:473px;top:565px;font-size:12px;letter-spacing:-0.63px;color:#6b6b6b">File system:</div>
<!-- status bar -->
<div class="t" style="left:136px;top:601px;font-size:12px;letter-spacing:-0.4px;color:#1b1b1b">2 items</div>
<div class="a" style="left:184px;top:598px;width:1px;height:18px;background:#a8a8a8"></div>
<div class="t" style="left:197px;top:601px;font-size:12px;letter-spacing:-0.4px;color:#1b1b1b">1 item selected</div>
<div class="a" style="left:283px;top:598px;width:1px;height:18px;background:#a8a8a8"></div>
<!-- ============ PROPERTIES ============ -->
<div id="pr" class="a"></div>
<svg style="left:543px;top:203px" width="15" height="15" viewBox="5 3.5 43.5 47.5"><use href="#drv"/></svg>
<div class="pt" style="left:564px;top:204px;font-size:11.5px;letter-spacing:-0.3px">(C:) Local Disk Properties</div>
<svg style="left:852px;top:205px" width="11" height="11" viewBox="0 0 11 11"><path d="M0.7 0.7 L10.3 10.3 M10.3 0.7 L0.7 10.3" stroke="#222" stroke-width="1.1"/></svg>
<!-- tabs -->
<div class="tab" style="letter-spacing:-0.58px;left:541px;top:231px;width:96px;height:20px">Security</div>
<div class="tab" style="letter-spacing:-0.57px;left:636px;top:231px;width:141px;height:20px">Previous Versions</div>
<div class="tab" style="letter-spacing:-0.63px;left:776px;top:231px;width:89px;height:20px">Quota</div>
<div class="tab" style="letter-spacing:-0.5px;left:622px;top:251px;width:74px;height:18px">Tools</div>
<div class="tab" style="letter-spacing:-0.69px;left:695px;top:251px;width:90px;height:18px">Hardware</div>
<div class="tab" style="letter-spacing:-0.76px;left:784px;top:251px;width:81px;height:18px">Sharing</div>
<div class="a" style="left:538px;top:268px;width:328px;height:363px;background:#f9f9f9;border:1px solid #dedede"></div>
<div class="tab" style="letter-spacing:-0.66px;left:538px;top:248px;width:85px;height:22px;background:#f9f9f9;line-height:20px;border-color:#dedede">General</div>
<svg style="left:553px;top:280px" width="30" height="33" viewBox="5 3.5 43.5 47.5"><use href="#drv"/></svg>
<div class="a" style="left:621px;top:288px;width:231px;height:21px;background:#fff;border:1px solid #d6d6d6;border-bottom:2px solid #0067c0"></div>
<div class="a" style="left:624px;top:292px;width:1px;height:12px;background:#111"></div>
<div class="a" style="left:553px;top:319px;width:299px;height:1px;background:#cfcfcf"></div>
<div class="pt" style="left:553px;top:329px">Type:</div>
<div class="pt" style="left:621px;top:329px">Local Disk</div>
<div class="pt" style="letter-spacing:-0.71px;left:553px;top:349px">File system:</div>
<div class="pt" style="letter-spacing:-0.81px;left:621px;top:349px">NTFS</div>
<div class="a" style="left:553px;top:367px;width:299px;height:1px;background:#cfcfcf"></div>
<div class="a" style="left:553px;top:376px;width:14px;height:14px;background:#26a0da"></div>
<div class="pt" style="left:572px;top:376px">Used space:</div>
<div class="pt" style="right:179px;top:376px">76,353,613,824 bytes</div>
<div class="pt" style="right:120px;top:376px">71.1 GB</div>
<div class="a" style="left:553px;top:396px;width:14px;height:14px;background:#a9a9a9"></div>
<div class="pt" style="letter-spacing:-0.61px;left:572px;top:395px">Free space:</div>
<div class="pt" style="right:179px;top:395px">30,913,609,728 bytes</div>
<div class="pt" style="right:120px;top:395px">28.7 GB</div>
<div class="a" style="left:553px;top:419px;width:299px;height:1px;background:#cfcfcf"></div>
<div class="pt" style="left:572px;top:428px">Capacity:</div>
<div class="pt" style="right:179px;top:428px">107,267,223,552 bytes</div>
<div class="pt" style="right:120px;top:428px">99.8 GB</div>
<svg style="left:675px;top:449px" width="53" height="53" viewBox="-26.5 -26.5 53 53">
 <circle r="21.3" fill="none" stroke="#26a0da" stroke-width="10"/>
 <path d="M3.7 21 A21.3 21.3 0 0 1 -21.3 0" fill="none" stroke="#a9a9a9" stroke-width="10"/>
</svg>
<div class="pt" style="left:685px;top:515px">Drive C:</div>
<div class="btn" style="letter-spacing:-0.62px;left:777px;top:506px;width:75px;height:20px">Details</div>
<div class="a" style="left:553px;top:532px;width:299px;height:1px;background:#cfcfcf"></div>
<div class="a" style="left:553px;top:563px;width:12px;height:12px;background:#f2f2f2;border:1px solid #8a8a8a;border-radius:2px"></div>
<div class="pt" style="left:567px;top:563px">Compress this drive to save disk space</div>
<div class="a" style="left:553px;top:584px;width:12px;height:12px;background:#0067c0;border-radius:2px"></div>
<svg style="left:553px;top:584px" width="12" height="12" viewBox="0 0 12 12"><path d="M2.5 6.2 L5 8.6 L9.6 3.4" fill="none" stroke="#fff" stroke-width="1.2"/></svg>
<div class="pt" style="letter-spacing:-0.44px;left:567px;top:584px">Allow files on this drive to have contents indexed in addition to</div>
<div class="pt" style="left:567px;top:596px">file properties</div>
<div class="btn" style="left:644px;top:638px;width:69px;height:20px;border-color:#0067c0">OK</div>
<div class="btn" style="letter-spacing:-0.58px;left:721px;top:638px;width:68px;height:20px">Cancel</div>
<div class="btn" style="letter-spacing:-0.65px;left:797px;top:638px;width:68px;height:20px;border-color:#e3e3e3;color:#a0a0a0;background:#f9f9f9">Apply</div>

<!-- ============ TASKBAR ============ -->
<div id="tb" class="a" style="left:2px;width:963px;background:#f2f2f2;border-top:1px solid #e8e8e8"></div>
<svg style="left:14px;top:688px" width="22" height="22" viewBox="0 0 22 22"><defs><linearGradient id="wm" x1="0" y1="0" x2="1" y2="1"><stop offset="0" stop-color="#b9bcc2"/><stop offset="1" stop-color="#7d8188"/></linearGradient><linearGradient id="wc" x1="0" y1="0" x2="0" y2="1"><stop offset="0" stop-color="#ffffff"/><stop offset="1" stop-color="#d5d9e0"/></linearGradient></defs><circle cx="11" cy="10" r="10" fill="url(#wm)"/><path d="M10 19 Q7 19 7 16 Q7 13.5 9.5 13.5 Q10.5 11 13.5 11 Q17 11 17.5 14 Q19.5 14.5 19.5 16.5 Q19.5 19 17 19 Z" fill="url(#wc)"/></svg>
<!-- start -->
<svg style="left:400px;top:688px" width="21" height="21" viewBox="0 0 21 21"><defs><linearGradient id="st" x1="0" y1="0" x2="1" y2="1"><stop offset="0" stop-color="#7fd1f8"/><stop offset="1" stop-color="#1b74d6"/></linearGradient></defs><path d="M0 2 Q0 0 2 0 H9.8 V9.8 H0 Z M11.2 0 H19 Q21 0 21 2 V9.8 H11.2 Z M0 11.2 H9.8 V21 H2 Q0 21 0 19 Z M11.2 11.2 H21 V19 Q21 21 19 21 H11.2 Z" fill="url(#st)"/></svg>
<div class="a" style="left:436px;top:680px;width:41px;height:31px;background:#fafafa;border-radius:4px 4px 0 0;border:1px solid #e6e6e6;border-bottom:none"></div>
<svg style="left:447px;top:688px" width="23" height="21" viewBox="0 0 23 21"><path d="M0.5 2 Q0.5 0.5 2 0.5 H8 L10 2.5 H21 Q22.5 2.5 22.5 4 V19 Q22.5 20.5 21 20.5 H2 Q0.5 20.5 0.5 19 Z" fill="#f0b429"/><path d="M0.5 5 H22.5 V19 Q22.5 20.5 21 20.5 H2 Q0.5 20.5 0.5 19 Z" fill="#ffd65c"/><rect x="6" y="13.5" width="11" height="5" rx="1" fill="#1f6fc2"/></svg>
<svg style="left:493px;top:688px" width="24" height="21" viewBox="0 0 24 24"><defs><linearGradient id="eg" x1="0" y1="0" x2="1" y2="1"><stop offset="0" stop-color="#3fd47d"/><stop offset="0.5" stop-color="#1ba3e0"/><stop offset="1" stop-color="#0b5fb8"/></linearGradient></defs><path d="M21.5 15.5 Q23.5 12.5 23 9 Q22 2.5 15 0.8 Q6 -1 1.5 6 Q-1.5 12 2 18 Q6 24 13 23.5 Q18 23 21 19.5 Q17 21 14 20 Q10 18.5 10 15 Q10 12.5 12.5 12 Q16 11.5 17.5 14.5 Q19 16.5 21.5 15.5 Z" fill="url(#eg)"/><path d="M12.5 12 Q10 12.5 10 15 Q10 18.5 14 20 Q9 21 5.5 17 Q3 13 6 9.5 Q9 6.5 13 8 Q16 9.5 15.5 12 Q14 11.5 12.5 12 Z" fill="#0a4fa8"/></svg>
<svg style="left:541px;top:688px" width="22" height="21" viewBox="0 0 22 21"><path d="M6 4 V2.5 Q6 0.8 8 0.8 H14 Q16 0.8 16 2.5 V4" fill="none" stroke="#3ab0f0" stroke-width="1.4"/><path d="M1 4.5 H21 V18 Q21 20.5 18.5 20.5 H3.5 Q1 20.5 1 18 Z" fill="#1c4f8f"/><path d="M1 4.5 H21 V7 H1 Z" fill="#2a86d8"/><rect x="7" y="9" width="3.6" height="3.6" fill="#f25022"/><rect x="11.4" y="9" width="3.6" height="3.6" fill="#7fba00"/><rect x="7" y="13.4" width="3.6" height="3.6" fill="#00a4ef"/><rect x="11.4" y="13.4" width="3.6" height="3.6" fill="#ffb900"/></svg>
<!-- tray -->
<svg style="left:815px;top:695px" width="10" height="6" viewBox="0 0 10 6"><path d="M1 5.2 L5 1.2 L9 5.2" fill="none" stroke="#555" stroke-width="1"/></svg>
<svg style="left:836px;top:692px" width="15" height="14" viewBox="0 0 15 14"><path d="M1 4.5 H3.5 L7.5 1 V9" fill="none" stroke="#222" stroke-width="1.1"/><path d="M1 4.5 V9 H3" fill="none" stroke="#222" stroke-width="1.1"/><circle cx="10.5" cy="9.5" r="4" fill="#1a1a1a"/><path d="M8.8 7.8 L12.2 11.2 M12.2 7.8 L8.8 11.2" stroke="#fff" stroke-width="1"/></svg>
<svg style="left:857px;top:691px" width="16" height="15" viewBox="0 0 16 15"><path d="M10 2 H1 V11 H10" fill="none" stroke="#222" stroke-width="1.1"/><path d="M4 14 H9 M6.5 11 V14" stroke="#222" stroke-width="1.1"/><rect x="11" y="0.5" width="4" height="4" fill="none" stroke="#222" stroke-width="1"/><path d="M13 4.5 V14.5" stroke="#222" stroke-width="1.1"/></svg>
<svg style="left:879px;top:692px" width="17" height="14" viewBox="0 0 17 14"><path d="M4 12 Q1 12 1 9 Q1 6.5 3.5 6 Q4 2 8 2 Q11.5 2 12.5 5 Q16 5.5 16 8.5 Q16 12 12.5 12 Z" fill="#bdbdbd" stroke="#444" stroke-width="1"/><path d="M2 1 L15 13.5" stroke="#333" stroke-width="1.1"/></svg>
<div class="t" style="left:909px;top:685px;font-size:10px;line-height:12px;color:#1b1b1b;letter-spacing:-0.06px">5:38 AM</div>
<div class="t" style="left:903px;top:700px;font-size:10px;line-height:12px;color:#1b1b1b;letter-spacing:-0.06px">11/17/2025</div>
</body></html>
